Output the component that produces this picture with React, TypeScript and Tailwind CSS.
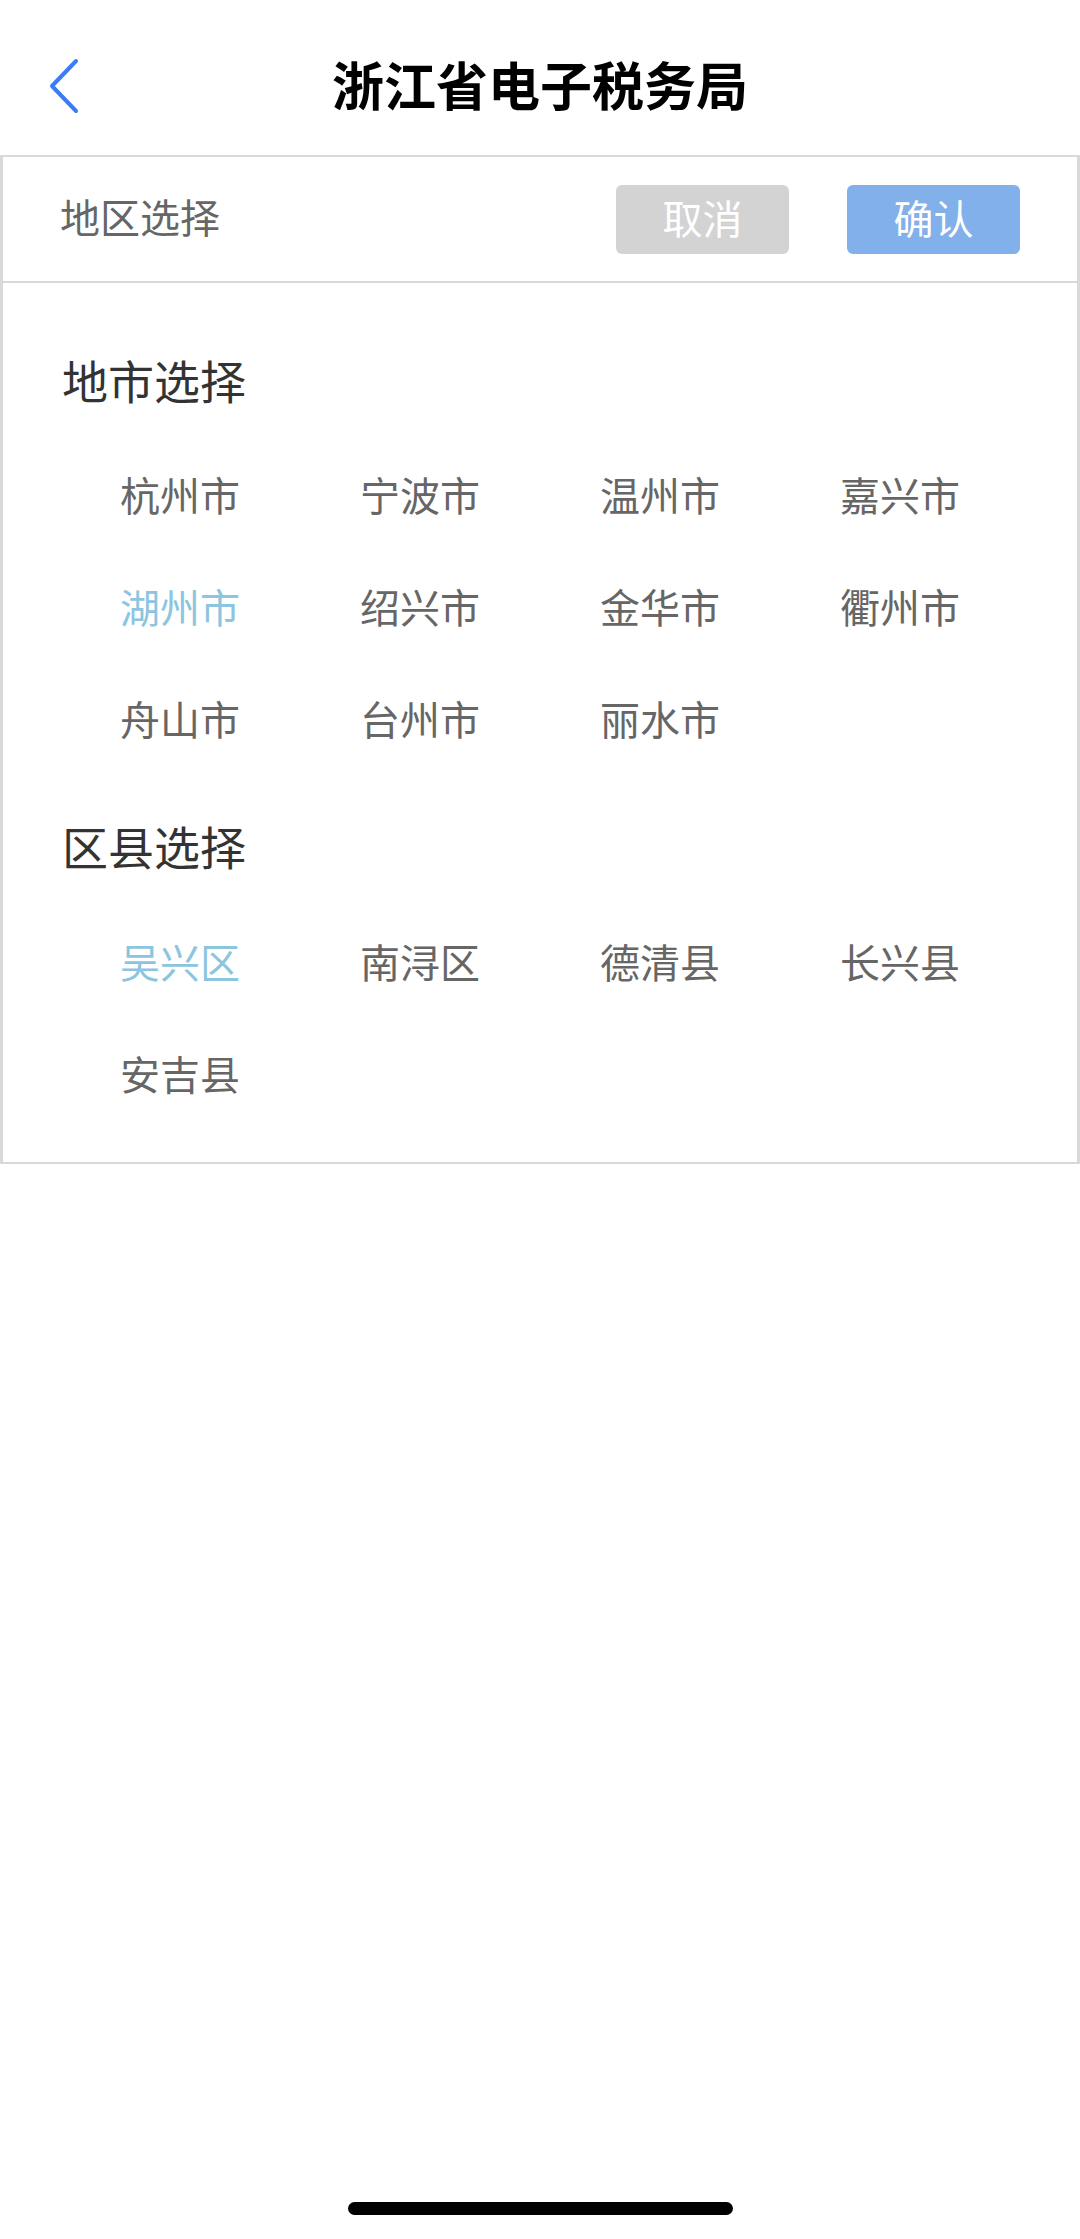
import { useState } from "react";

const CITIES = [
  "杭州市",
  "宁波市",
  "温州市",
  "嘉兴市",
  "湖州市",
  "绍兴市",
  "金华市",
  "衢州市",
  "舟山市",
  "台州市",
  "丽水市",
];

const DISTRICTS = ["吴兴区", "南浔区", "德清县", "长兴县", "安吉县"];

const font = { fontFamily: '"Noto Sans CJK SC", "Noto Sans", sans-serif' };

function OptionGrid({
  items,
  selected,
  onPick,
}: {
  items: string[];
  selected: string;
  onPick: (v: string) => void;
}) {
  return (
    <div className="grid grid-cols-4">
      {items.map((it) => (
        <button
          key={it}
          onClick={() => onPick(it)}
          className={`h-[112px] pb-[6px] flex items-center justify-center text-[40px] leading-none ${
            it === selected ? "text-[#8cc5df]" : "text-[#666666]"
          }`}
        >
          {it}
        </button>
      ))}
    </div>
  );
}

export default function App() {
  const [city, setCity] = useState("湖州市");
  const [district, setDistrict] = useState("吴兴区");

  return (
    <div className="min-h-[2239px] flex flex-col bg-white" style={font}>
      <header className="h-[155px] pt-[16px] grid grid-cols-[1fr_auto_1fr] items-center">
        <button className="pl-[48px] justify-self-start">
          <svg width="34" height="56" viewBox="0 0 34 56" fill="none">
            <path
              d="M28 3 L4 28 L28 53"
              stroke="#3a7cf4"
              strokeWidth="4"
              strokeLinecap="round"
              strokeLinejoin="round"
            />
          </svg>
        </button>
        <h1 className="text-[52px] font-bold text-black leading-none pb-[4px]">浙江省电子税务局</h1>
        <div />
      </header>

      <div className="border-x-[3px] border-y-2 border-[#d9d9d9]">
        <div className="h-[126px] flex items-center px-[57px] border-b-2 border-[#d9d9d9]">
          <span className="flex-1 text-[40px] text-[#666666] leading-none pb-[6px]">地区选择</span>
          <button className="w-[173px] h-[69px] pb-[4px] rounded-[6px] bg-[#d3d3d3] text-white text-[40px] leading-none">
            取消
          </button>
          <button className="ml-[58px] w-[173px] h-[69px] pb-[4px] rounded-[6px] bg-[#82b0ea] text-white text-[40px] leading-none">
            确认
          </button>
        </div>

        <div className="px-[57px] pt-[69px] pb-[30px]">
          <h2 className="h-[60px] pb-[6px] flex items-center pl-[2px] text-[46px] text-[#333333] leading-none">
            地市选择
          </h2>
          <div className="mt-[29px]">
            <OptionGrid items={CITIES} selected={city} onPick={setCity} />
          </div>
          <h2 className="mt-[41px] h-[60px] pb-[6px] flex items-center pl-[2px] text-[46px] text-[#333333] leading-none">
            区县选择
          </h2>
          <div className="mt-[30px]">
            <OptionGrid items={DISTRICTS} selected={district} onPick={setDistrict} />
          </div>
        </div>
      </div>

      <div className="flex-1" />
      <div className="flex justify-center pb-[24px]">
        <div className="w-[385px] h-[13px] rounded-full bg-black" />
      </div>
    </div>
  );
}
